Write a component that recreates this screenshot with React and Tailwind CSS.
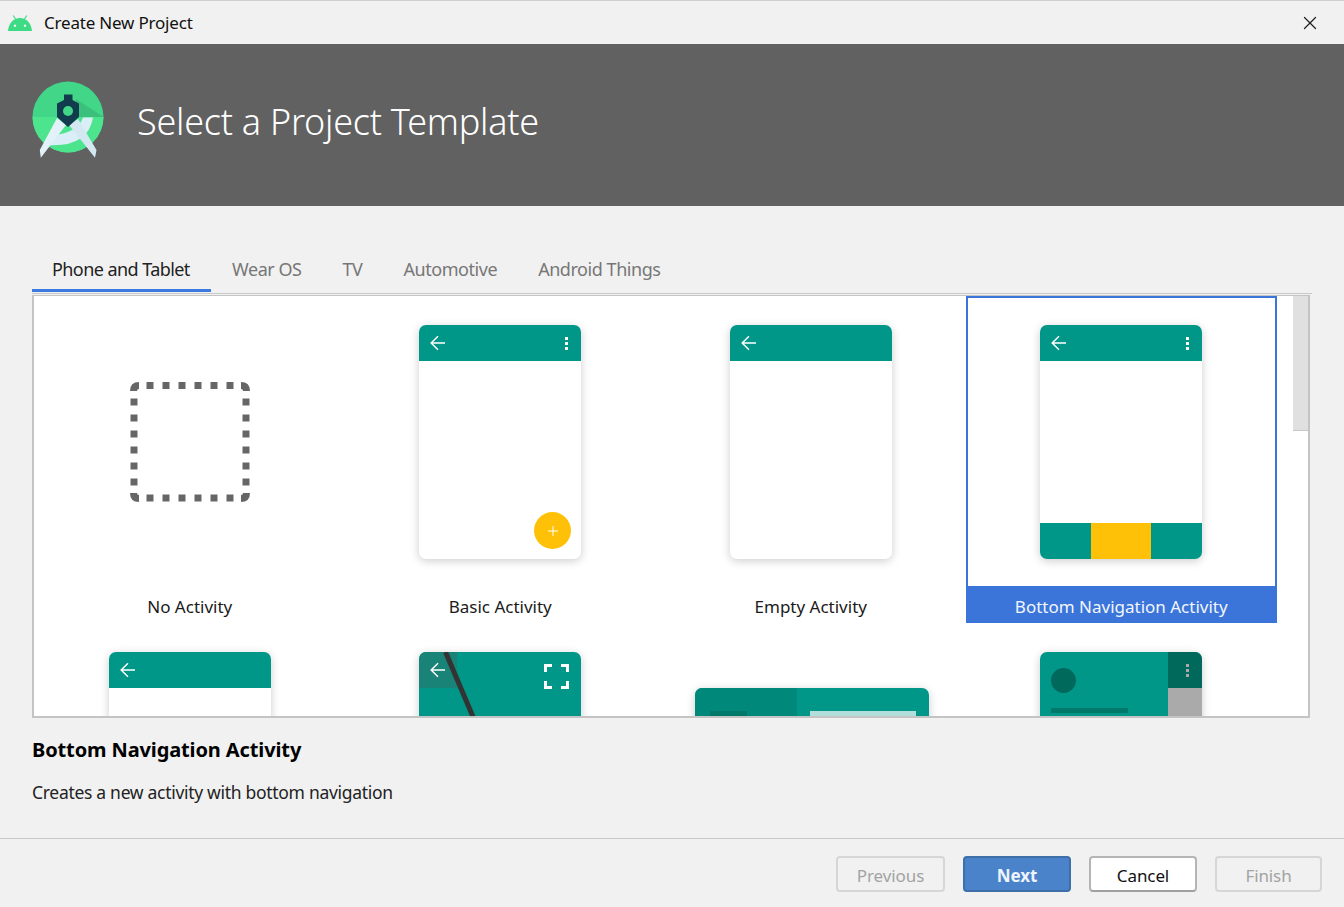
import { X } from "lucide-react";

const UI_FONT = "font-['Noto_Sans','Open_Sans',sans-serif]";
const DOTS = [21, 37, 53, 69, 85, 101];

function BackArrow() {
  return (
    <svg width="16" height="16" viewBox="0 0 16 16" fill="none" stroke="white" strokeWidth="1.5">
      <path d="M15 8H1.500M8 1.200 1.200 8 8 14.800" />
    </svg>
  );
}

function MoreDots({ color = "bg-white" }) {
  return (
    <div className="flex flex-col gap-[2px]">
      <span className={`h-[3px] w-[3px] ${color}`} />
      <span className={`h-[3px] w-[3px] ${color}`} />
      <span className={`h-[3px] w-[3px] ${color}`} />
    </div>
  );
}

function PhoneBar({ dots }) {
  return (
    <div className="flex h-9 shrink-0 items-center justify-between bg-[#009688] pl-[11px] pr-[13px]">
      <BackArrow />
      {dots && <MoreDots />}
    </div>
  );
}

function Phone({ dots, children }) {
  return (
    <div className="relative flex h-[234px] w-[162px] flex-col overflow-hidden rounded-[7px] bg-white shadow-[0_2px_10px_rgba(0,0,0,0.2)]">
      <PhoneBar dots={dots} />
      {children}
    </div>
  );
}

function Cell({ label, selected, children }) {
  return (
    <div className={`flex h-[327px] flex-col border-2 border-b-0 ${selected ? "border-[#3b75d9]" : "border-transparent"}`}>
      <div className="flex h-[288px] shrink-0 justify-center pt-[27px]">{children}</div>
      <div className={`flex h-[37px] items-center justify-center pt-1 text-[17px] ${selected ? "-mx-[2px] bg-[#3b75d9] text-[#f2f6ff]" : "text-[#1a1a1a]"}`}>
        {label}
      </div>
    </div>
  );
}

function NoActivity() {
  return (
    <div className="flex h-[234px] w-[162px] items-center justify-center">
      <svg width="122" height="122" viewBox="0 0 122 122" fill="none" stroke="#666" strokeWidth="7">
        {DOTS.map((d) => (
          <g key={d}>
            <path d={`M${d - 3.5} 4.500h7`} />
            <path d={`M${d - 3.5} 117h7`} />
            <path d={`M5 ${d - 3.5}v7`} />
            <path d={`M117 ${d - 3.5}v7`} />
          </g>
        ))}
        <path d="M4.500 10Q4.500 4.500 10 4.500" />
        <path d="M112 4.500Q117.500 4.500 117.500 10" />
        <path d="M4.500 112Q4.500 117.500 10 117.500" />
        <path d="M112 117.500Q117.500 117.500 117.500 112" />
      </svg>
    </div>
  );
}

function Button({ children, kind, width }) {
  const styles = {
    disabled: "border-[#d6d6d6] text-[#a3a3a3]",
    primary: "border-[#3e6fa8] bg-[#4a83c9] font-bold text-[#eef4fb]",
    plain: "border-[#b5b5b5] border-b-[#a0a0a0] bg-white text-[#111]",
  };
  return (
    <button className={`flex h-9 items-center justify-center rounded-[4px] border-2 pt-[3px] text-[17px] tracking-[-0.1px] ${width} ${styles[kind]}`}>
      {children}
    </button>
  );
}

export default function App() {
  const tabs = ["Wear OS", "TV", "Automotive", "Android Things"];

  return (
    <div className={`flex h-[907px] w-[1344px] flex-col overflow-hidden bg-[#f1f1f1] ${UI_FONT}`}>
      {/* title bar */}
      <div className="flex h-11 shrink-0 items-center border-t border-[#cfcfcf] pl-2 pr-[23px]">
        <svg width="24" height="16" viewBox="0 0 24 16" fill="#3ddc84" className="mt-[1px]">
          <path d="M0 16C.4 10 3.400 6 7 4.200L4.800.8l.9-.6L8 3.700C10.500 2.800 13.500 2.800 16 3.700L18.300.2l.9.6L17 4.200C20.600 6 23.600 10 24 16Z" />
          <circle cx="7" cy="10.800" r="1.200" fill="#f1f1f1" />
          <circle cx="17" cy="10.800" r="1.200" fill="#f1f1f1" />
        </svg>
        <span className="ml-3 mt-[1px] text-[17px] tracking-[-0.2px] text-[#111]">Create New Project</span>
        <X className="ml-auto text-[#222]" size={22} strokeWidth={1.4} />
      </div>

      {/* banner */}
      <div className="flex h-[162px] shrink-0 items-center bg-[#616161] pb-[6px] pl-8">
        <svg width="74" height="80" viewBox="0 0 74 80" className="mt-[-2px]">
          <circle cx="36" cy="36" r="35.500" fill="#41d688" />
          <path d="M.5 36h71A35.500 35.500 0 0 1 .5 36Z" fill="#4de48e" />
          <path d="M44 18 71.500 36H44Z" fill="#3bc07c" />
          <path d="M51 36.500Q46 52 19 54.500L14 64Q56 67 61 36.500Z" fill="#d9eef6" />
          <path d="M25 37 7.800 69 8.800 76.700 34 44Z" fill="#e3f2f8" />
          <path d="M46 38 64.500 69 63 76.700 37 44Z" fill="#d3e8f1" />
          <path d="M32 13.500h8.500V19L47 22.500V36L36 46 25 36V22.500L32 19Z" fill="#123c4e" />
          <circle cx="36" cy="30" r="5" fill="#41d688" />
        </svg>
        <h1 className="ml-[31px] text-[36px] font-light tracking-[-0.25px] text-white">Select a Project Template</h1>
      </div>

      {/* tabs */}
      <div className="mx-8 mt-[44px] flex h-[44px] shrink-0 items-start border-b border-[#c9c9c9] text-[18px] tracking-[-0.45px]">
        <div className="h-[42px] w-[179px] border-b-[3px] border-[#3b7be0] pl-5 pt-[6px] tracking-[-0.57px] text-[#222]">Phone and Tablet</div>
        {tabs.map((tab, i) => (
          <div key={tab} className={`pt-[6px] text-[#777] ${i === 0 ? "ml-[21px]" : "ml-[41px]"}`}>{tab}</div>
        ))}
      </div>

      {/* template grid */}
      <div className="relative mx-8 mt-[1px] h-[423px] w-[1278px] shrink-0 overflow-hidden border-2 border-t border-[#c4c4c4] bg-white">
        <div className="grid w-[1242.5px] grid-cols-4 pl-[0.5px]">
          <Cell label="No Activity"><NoActivity /></Cell>
          <Cell label="Basic Activity">
            <Phone dots>
              <div className="absolute bottom-[10px] right-[10px] flex h-[37px] w-[37px] items-center justify-center rounded-full bg-[#ffc107]">
                <svg width="10" height="10" viewBox="0 0 10 10" stroke="white" strokeWidth="1"><path d="M5 0v10M0 5h10" /></svg>
              </div>
            </Phone>
          </Cell>
          <Cell label="Empty Activity"><Phone /></Cell>
          <Cell label="Bottom Navigation Activity" selected>
            <Phone dots>
              <div className="mt-auto flex h-9">
                <div className="flex-1 bg-[#009688]" />
                <div className="w-[60px] bg-[#ffc107]" />
                <div className="flex-1 bg-[#009688]" />
              </div>
            </Phone>
          </Cell>

          <Cell label=""><Phone /></Cell>
          <Cell label="">
            <div className="relative h-[234px] w-[162px] overflow-hidden rounded-[7px] bg-[#009688] shadow-[0_2px_10px_rgba(0,0,0,0.2)]">
              <div className="absolute left-0 top-0 h-9 w-[38px] bg-[#1a8378] pl-[11px] pt-[10px]"><BackArrow /></div>
              <div className="absolute left-[24px] top-0 h-[100px] w-[5px] origin-top -rotate-[23deg] bg-[#333]" />
              <svg className="absolute right-[12px] top-[12px]" width="25" height="25" viewBox="0 0 25 25" fill="none" stroke="white" strokeWidth="3">
                <path d="M1.500 8V1.500H8M17 1.500h6.500V8M1.500 17v6.500H8M23.500 17v6.500H17" />
              </svg>
            </div>
          </Cell>
          <Cell label="">
            <div className="ml-[2px] mt-[36px] flex h-[162px] w-[234px] overflow-hidden rounded-[7px] bg-[#009688] shadow-[0_2px_10px_rgba(0,0,0,0.2)]">
              <div className="h-full w-[102px] bg-[#00897b] pl-[15px] pt-[23px]">
                <div className="h-2 w-[37px] bg-[#00796b]" />
              </div>
              <div className="ml-[13px] mt-[23px] h-[60px] w-[106px] bg-[#b2dfdb]" />
            </div>
          </Cell>
          <Cell label="">
            <div className="flex h-[234px] w-[162px] overflow-hidden rounded-[7px] bg-[#009688] shadow-[0_2px_10px_rgba(0,0,0,0.2)]">
              <div className="flex-1 pl-[11px] pt-4">
                <div className="h-[25px] w-[25px] rounded-full bg-[#00695c]" />
                <div className="mt-[15px] h-[5px] w-[77px] bg-[#00796b]" />
              </div>
              <div className="w-[34px]">
                <div className="flex h-9 items-center justify-center bg-[#00695c] pl-[5px]"><MoreDots color="bg-[#aaaaaa]" /></div>
                <div className="h-full bg-[#aaaaaa]" />
              </div>
            </div>
          </Cell>
        </div>
        {/* scrollbar */}
        <div className="absolute right-0 top-0 h-[135px] w-[15px] border-b border-[#c8c8c8] bg-[#e0e0e0]" />
      </div>

      {/* description */}
      <div className="mx-8 mt-[18px] h-[102px] shrink-0 text-black">
        <h2 className="text-[20px] font-bold leading-7 tracking-[-0.12px]">Bottom Navigation Activity</h2>
        <p className="mt-[14px] text-[17.500px] leading-7 tracking-[-0.3px] text-[#222]">Creates a new activity with bottom navigation</p>
      </div>

      {/* footer */}
      <div className="flex flex-1 items-start gap-[18px] border-t border-[#c8c8c8] pl-[836px] pt-[17px]">
        <Button kind="disabled" width="w-[109px]">Previous</Button>
        <Button kind="primary" width="w-[108px]">Next</Button>
        <Button kind="plain" width="w-[108px]">Cancel</Button>
        <Button kind="disabled" width="w-[107px]">Finish</Button>
      </div>
    </div>
  );
}
